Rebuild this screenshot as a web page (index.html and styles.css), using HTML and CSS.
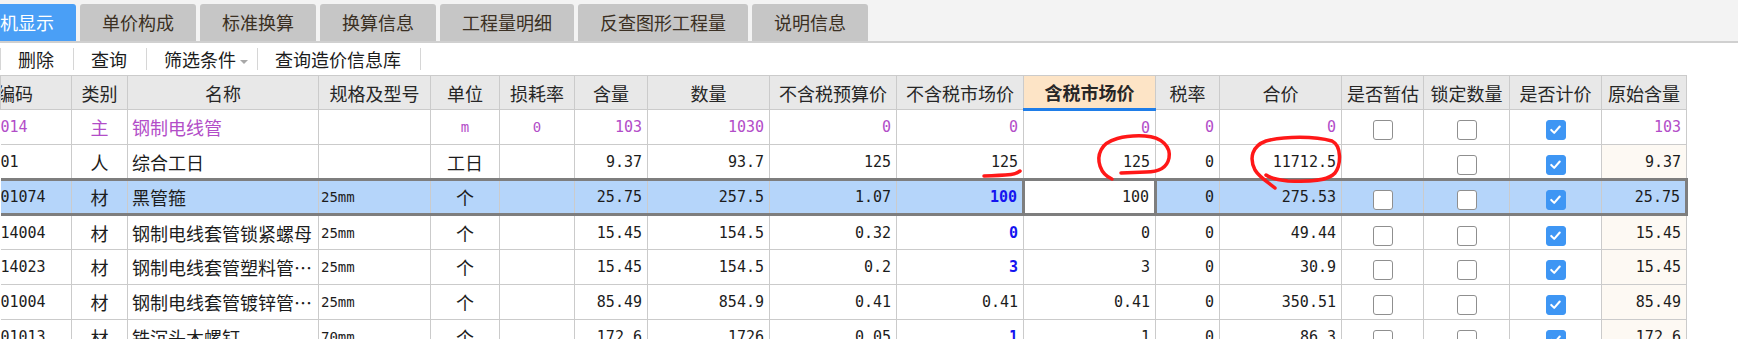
FILE: index.html
```html
<!DOCTYPE html>
<html lang="zh-CN">
<head>
    <meta charset="UTF-8">
    <title>人材机显示</title>
    <link rel="stylesheet" href="styles.css">
</head>
<body>
    <!-- 页签 -->
    <div class="tabbar">
        <div class="tab active">人材机显示</div>
        <div class="tab">单价构成</div>
        <div class="tab">标准换算</div>
        <div class="tab">换算信息</div>
        <div class="tab">工程量明细</div>
        <div class="tab">反查图形工程量</div>
        <div class="tab">说明信息</div>
    </div>

    <!-- 工具条 -->
    <div class="toolbar">
        <span class="sep"></span>
        <span class="tool">删除</span>
        <span class="sep"></span>
        <span class="tool">查询</span>
        <span class="sep"></span>
        <span class="tool drop">筛选条件<i class="caret"></i></span>
        <span class="sep"></span>
        <span class="tool">查询造价信息库</span>
        <span class="sep"></span>
    </div>

    <table class="grid">
        <colgroup>
            <col style="width:71px"><col style="width:56px"><col style="width:191px"><col style="width:112px">
            <col style="width:69px"><col style="width:75px"><col style="width:73px"><col style="width:122px">
            <col style="width:127px"><col style="width:127px"><col style="width:132px"><col style="width:64px">
            <col style="width:122px"><col style="width:82px"><col style="width:86px"><col style="width:92px">
            <col style="width:85px">
        </colgroup>
        <thead>
            <tr>
                <th class="code-h">编码</th><th>类别</th><th>名称</th><th>规格及型号</th><th>单位</th><th>损耗率</th>
                <th>含量</th><th>数量</th><th>不含税预算价</th><th>不含税市场价</th><th class="hot">含税市场价</th>
                <th>税率</th><th>合价</th><th>是否暂估</th><th>锁定数量</th><th>是否计价</th><th>原始含量</th>
            </tr>
        </thead>
        <tbody>
            <tr class="main">
                <td class="code">014</td><td class="c">主</td><td class="name">钢制电线管</td><td class="spec"></td>
                <td class="c mono">m</td><td class="c mono">0</td><td class="n">103</td><td class="n">1030</td>
                <td class="n">0</td><td class="n">0</td><td class="n">0</td><td class="n">0</td><td class="n">0</td>
                <td class="c"><span class="cb"></span></td><td class="c"><span class="cb"></span></td>
                <td class="c"><span class="cb on"><svg viewBox="0 0 20 20"><path d="M5 10.5l3.5 3.5 6.5-7.5"/></svg></span></td>
                <td class="n">103</td>
            </tr>
            <tr>
                <td class="code">01</td><td class="c">人</td><td class="name">综合工日</td><td class="spec"></td>
                <td class="c">工日</td><td></td><td class="n">9.37</td><td class="n">93.7</td>
                <td class="n">125</td><td class="n">125</td><td class="n">125</td><td class="n">0</td><td class="n">11712.5</td>
                <td></td><td class="c"><span class="cb"></span></td>
                <td class="c"><span class="cb on"><svg viewBox="0 0 20 20"><path d="M5 10.5l3.5 3.5 6.5-7.5"/></svg></span></td>
                <td class="n orig">9.37</td>
            </tr>
            <tr class="sel">
                <td class="code">01074</td><td class="c">材</td><td class="name">黑管箍</td><td class="spec">25mm</td>
                <td class="c">个</td><td></td><td class="n">25.75</td><td class="n">257.5</td>
                <td class="n">1.07</td><td class="n blue">100</td><td class="n edit">100</td><td class="n">0</td><td class="n">275.53</td>
                <td class="c"><span class="cb"></span></td><td class="c"><span class="cb"></span></td>
                <td class="c"><span class="cb on"><svg viewBox="0 0 20 20"><path d="M5 10.5l3.5 3.5 6.5-7.5"/></svg></span></td>
                <td class="n orig last">25.75</td>
            </tr>
            <tr>
                <td class="code">14004</td><td class="c">材</td><td class="name">钢制电线套管锁紧螺母</td><td class="spec">25mm</td>
                <td class="c">个</td><td></td><td class="n">15.45</td><td class="n">154.5</td>
                <td class="n">0.32</td><td class="n blue">0</td><td class="n">0</td><td class="n">0</td><td class="n">49.44</td>
                <td class="c"><span class="cb"></span></td><td class="c"><span class="cb"></span></td>
                <td class="c"><span class="cb on"><svg viewBox="0 0 20 20"><path d="M5 10.5l3.5 3.5 6.5-7.5"/></svg></span></td>
                <td class="n orig">15.45</td>
            </tr>
            <tr>
                <td class="code">14023</td><td class="c">材</td><td class="name">钢制电线套管塑料管…</td><td class="spec">25mm</td>
                <td class="c">个</td><td></td><td class="n">15.45</td><td class="n">154.5</td>
                <td class="n">0.2</td><td class="n blue">3</td><td class="n">3</td><td class="n">0</td><td class="n">30.9</td>
                <td class="c"><span class="cb"></span></td><td class="c"><span class="cb"></span></td>
                <td class="c"><span class="cb on"><svg viewBox="0 0 20 20"><path d="M5 10.5l3.5 3.5 6.5-7.5"/></svg></span></td>
                <td class="n orig">15.45</td>
            </tr>
            <tr>
                <td class="code">01004</td><td class="c">材</td><td class="name">钢制电线套管镀锌管…</td><td class="spec">25mm</td>
                <td class="c">个</td><td></td><td class="n">85.49</td><td class="n">854.9</td>
                <td class="n">0.41</td><td class="n">0.41</td><td class="n">0.41</td><td class="n">0</td><td class="n">350.51</td>
                <td class="c"><span class="cb"></span></td><td class="c"><span class="cb"></span></td>
                <td class="c"><span class="cb on"><svg viewBox="0 0 20 20"><path d="M5 10.5l3.5 3.5 6.5-7.5"/></svg></span></td>
                <td class="n orig">85.49</td>
            </tr>
            <tr>
                <td class="code">01013</td><td class="c">材</td><td class="name">铁沉头木螺钉</td><td class="spec">70mm</td>
                <td class="c">个</td><td></td><td class="n">172.6</td><td class="n">1726</td>
                <td class="n">0.05</td><td class="n blue">1</td><td class="n">1</td><td class="n">0</td><td class="n">86.3</td>
                <td class="c"><span class="cb"></span></td><td class="c"><span class="cb"></span></td>
                <td class="c"><span class="cb on"><svg viewBox="0 0 20 20"><path d="M5 10.5l3.5 3.5 6.5-7.5"/></svg></span></td>
                <td class="n orig">172.6</td>
            </tr>
        </tbody>
    </table>

    <!-- 红笔批注 -->
    <svg class="marks" width="1738" height="339" viewBox="0 0 1738 339">
        <path d="M984 176 Q1000 175.5 1011 174.5 Q1016 174 1020 171"/>
        <path d="M1112 179 C1100 174 1096 160 1101 150 C1106 139 1125 135 1145 136 C1162 137 1171 147 1169 158 C1167 168 1158 172 1146 172 L1121 173"/>
        <path d="M1275 188 C1268 182 1260 178 1255 170 C1249 158 1252 146 1266 141 C1285 136 1315 136 1332 141 C1342 146 1341 165 1335 173 C1328 181 1310 182 1288 181 C1278 180 1270 178 1266 175"/>
    </svg>
</body>
</html>
```

FILE: styles.css
```css
html, body {
    margin: 0;
    padding: 0;
}
body {
    position: relative;
    width: 1738px;
    height: 339px;
    overflow: hidden;
    background: #fff;
    color: #1c1c1c;
    font-family: "Noto Sans CJK SC", "Noto Sans", sans-serif;
    font-size: 18px;
}

/* 页签 */
.tabbar {
    display: flex;
    align-items: flex-end;
    gap: 4px;
    height: 37px;
    padding-top: 4px;
    margin-left: -58px;
    background: #f3f3f3;
    border-bottom: 2px solid #d0d0d0;
}
.tab {
    height: 37px;
    line-height: 36px;
    padding: 0 22px;
    background: #c6c6c6;
    color: #3b3023;
    border-radius: 3px 3px 0 0;
    white-space: nowrap;
}
.tab.active {
    background: #4a9ff6;
    color: #fff;
}

/* 工具条 */
.toolbar {
    display: flex;
    align-items: center;
    height: 32px;
    background: #fff;
}
.toolbar .sep {
    width: 1px;
    height: 22px;
    background: #d6d6d6;
}
.toolbar .tool {
    padding: 0 19px 0 17px;
    line-height: 32px;
    white-space: nowrap;
}
.toolbar .tool.drop {
    padding-right: 9px;
}
.caret {
    display: inline-block;
    margin-left: 4px;
    vertical-align: middle;
    border-left: 4px solid transparent;
    border-right: 4px solid transparent;
    border-top: 4px solid #a8a8a8;
}

/* 表格 */
.grid {
    border-collapse: collapse;
    table-layout: fixed;
    width: 1686px;
}
.grid th,
.grid td {
    border: 1px solid #cbcbcb;
    padding: 0 5px;
    white-space: nowrap;
    overflow: hidden;
}
.grid thead tr {
    height: 34px;
}
.grid tbody tr {
    height: 35px;
}
.grid th {
    background: #e8e8e8;
    font-weight: normal;
    color: #262626;
    text-align: center;
}
.grid th.code-h {
    text-align: left;
    padding-left: 0;
    text-indent: -4px;
}
.grid th.hot {
    background: #fde4c6;
    font-weight: bold;
    border-bottom: 3px solid #1f7de8;
}
.grid td.code {
    padding-left: 0;
    font-family: "DejaVu Sans Mono", monospace;
    font-size: 15px;
    border-left: none;
}
.grid td.c {
    text-align: center;
}
.grid td.name {
    padding-left: 4px;
}
.grid td.spec {
    padding-left: 2px;
    font-family: "DejaVu Sans Mono", monospace;
    font-size: 14px;
}
.grid td.n {
    text-align: right;
    font-family: "DejaVu Sans Mono", monospace;
    font-size: 15px;
}
.grid td.mono {
    font-family: "DejaVu Sans Mono", monospace;
    font-size: 14px;
}
.grid td.blue {
    color: #1414f0;
    font-weight: bold;
}
.grid td.orig {
    background: #fdf9f3;
}

/* 主材行 */
.grid tr.main td {
    color: #b24dc8;
}

/* 选中行 */
.grid tr.sel td {
    background: #b5d5fa;
    border-top: 3px solid #7e7e7e;
    border-bottom: 3px solid #7e7e7e;
}
.grid tr.sel td.edit {
    background: #fff;
    border-left: 3px solid #7e7e7e;
    border-right: 3px solid #7e7e7e;
}
.grid tr.sel td.last {
    border-right: 3px solid #7e7e7e;
}

/* 复选框 */
.cb {
    display: inline-block;
    box-sizing: border-box;
    width: 20px;
    height: 20px;
    vertical-align: middle;
    background: #fff;
    border: 1.5px solid #8f8f8f;
    border-radius: 3px;
}
.cb.on {
    background: #3e96f4;
    border-color: #3e96f4;
}
.cb svg {
    display: block;
    width: 17px;
    height: 17px;
}
.cb svg path {
    fill: none;
    stroke: #fff;
    stroke-width: 2.4;
    stroke-linecap: round;
    stroke-linejoin: round;
}

/* 批注 */
.marks {
    position: absolute;
    left: 0;
    top: 0;
    pointer-events: none;
}
.marks path {
    fill: none;
    stroke: #ff1818;
    stroke-width: 3.5;
    stroke-linecap: round;
    stroke-linejoin: round;
}
```
